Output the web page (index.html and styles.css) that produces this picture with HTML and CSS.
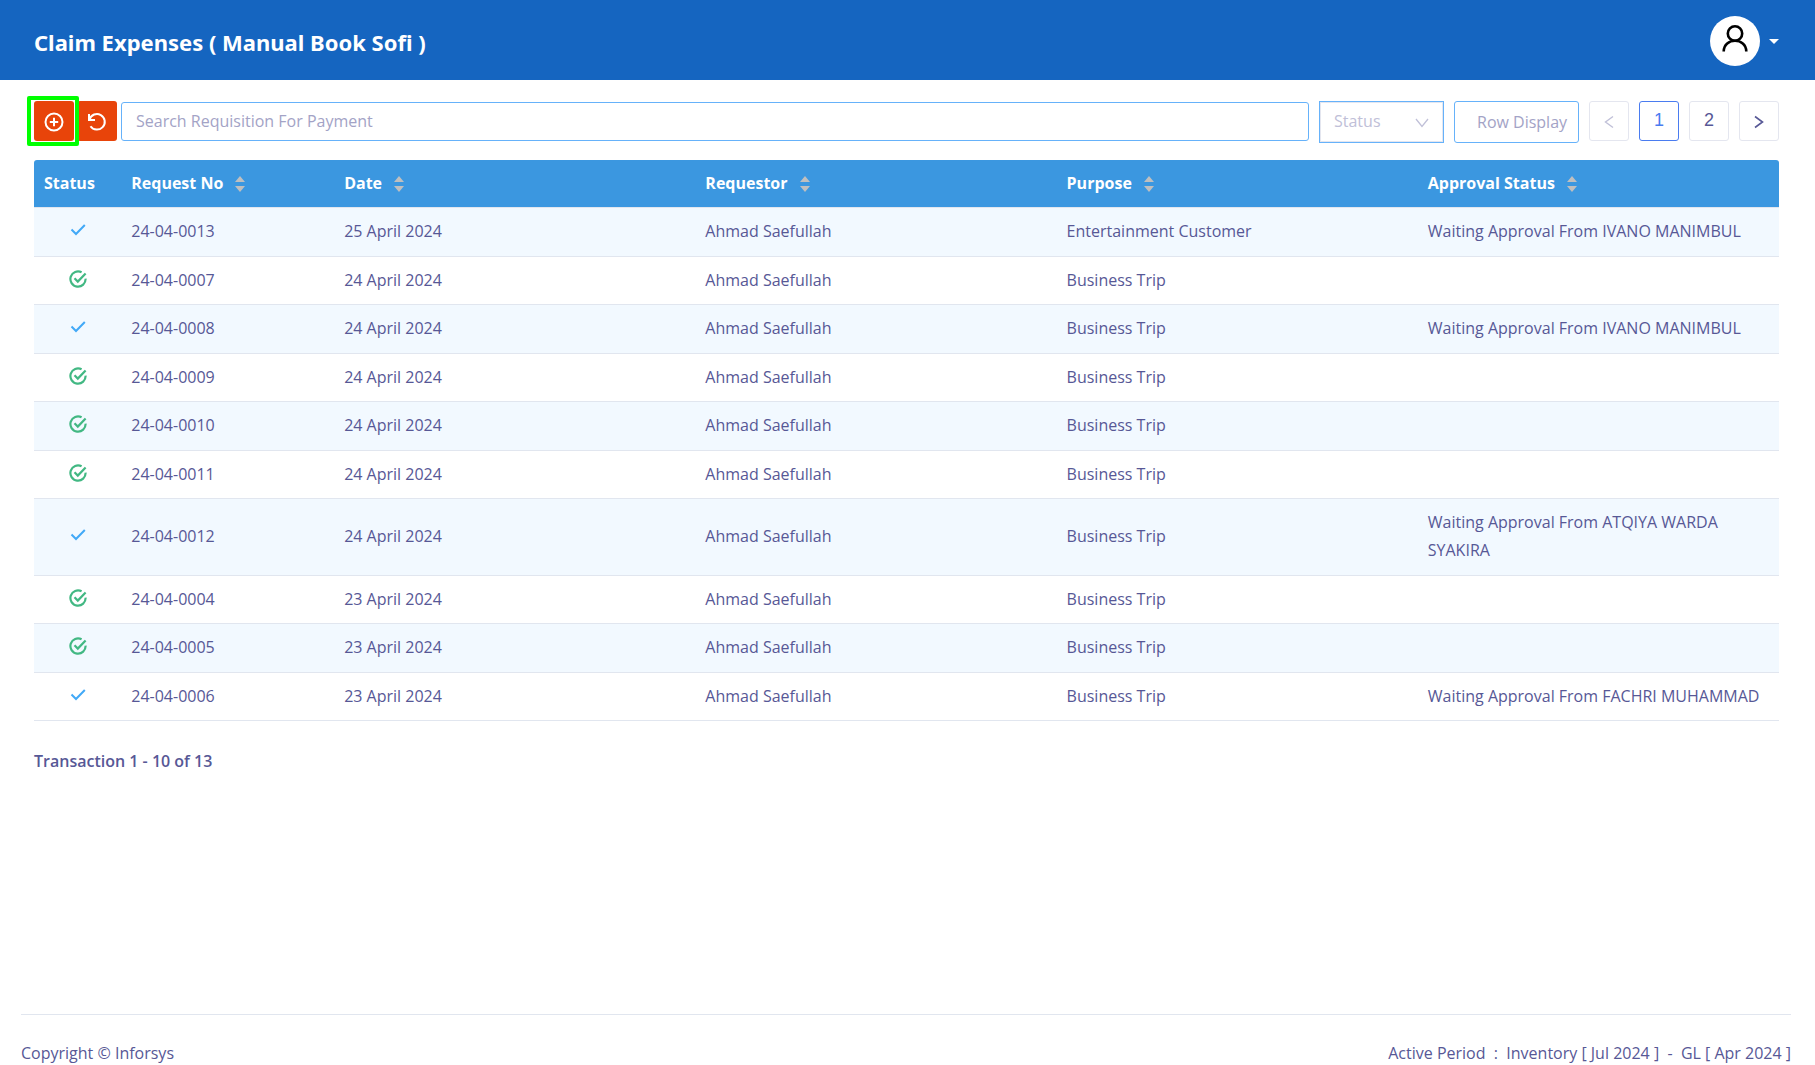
FILE: index.html
```html
<!DOCTYPE html>
<html lang="en">
<head>
<meta charset="utf-8">
<title>Claim Expenses</title>
<link rel="stylesheet" href="styles.css">
</head>
<body>
<svg class="sprite" aria-hidden="true">
  <symbol id="check" viewBox="0 0 16 16"><path d="M1.500 7.500l4.500 4.500 8.800-9" fill="none" stroke="currentColor" stroke-width="2"/></symbol>
  <symbol id="done" viewBox="0 0 18 18"><path d="M12.600 2.300A7.600 7.600 0 1 0 16.600 8.600M5.500 8.300l3.300 3.300L16.600 3.600" fill="none" stroke="currentColor" stroke-width="2.200"/></symbol>
  <symbol id="sort" viewBox="0 0 10 16"><path d="M5 0l5 6H0zM5 16l5-6H0z" fill="currentColor"/></symbol>
</svg>

<header class="topbar">
  <h1 class="title">Claim Expenses ( Manual Book Sofi )</h1>
  <button class="account" type="button" aria-label="Account">
    <span class="avatar"><svg width="28" height="30" viewBox="0 0 28 30" fill="none" stroke="#000" stroke-width="2.600"><circle cx="14" cy="9.500" r="7.200"/><path d="M2.700 27.500c0-14.400 22.600-14.400 22.600 0"/></svg></span>
    <svg width="10" height="5" viewBox="0 0 10 5" fill="#fff"><path d="M0 0h10L5 5z"/></svg>
  </button>
</header>

<main class="content">
  <div class="toolbar">
    <div class="actions">
      <button class="action highlighted" type="button" aria-label="Add">
        <svg width="20" height="20" viewBox="0 0 20 20" fill="none" stroke="#fff" stroke-width="2"><circle cx="10" cy="10" r="8.500"/><path d="M10 5.800v8.400M5.800 10h8.400"/></svg>
      </button>
      <button class="action" type="button" aria-label="Refresh">
        <svg width="20" height="20" viewBox="0 0 20 20" fill="none" stroke="#fff" stroke-width="2"><path d="M2 2v6h6M2.500 7.500A7.800 7.800 0 1 1 3.500 14.200"/></svg>
      </button>
      <input class="search" type="text" placeholder="Search Requisition For Payment" aria-label="Search Requisition For Payment">
    </div>
    <div class="picker">
      <select class="status-select" aria-label="Status"><option>Status</option></select>
      <svg class="chevron" width="14" height="10" viewBox="0 0 14 10" fill="none" stroke="currentColor" stroke-width="1.300"><path d="M1 1l6 7.500L13 1"/></svg>
    </div>
    <input class="row-display" type="text" placeholder="Row Display" aria-label="Row Display">
    <nav class="pages" aria-label="Pages">
      <button class="page" type="button" disabled aria-label="Previous"><svg width="10" height="14" viewBox="0 0 10 14" fill="none" stroke="currentColor" stroke-width="1.400"><path d="M9 1.500L1.500 7 9 12.500"/></svg></button>
      <button class="page current" type="button">1</button>
      <button class="page" type="button">2</button>
      <button class="page" type="button" aria-label="Next"><svg width="10" height="14" viewBox="0 0 10 14" fill="none" stroke="currentColor" stroke-width="1.600"><path d="M1 1.500L8.500 7 1 12.500"/></svg></button>
    </nav>
  </div>

  <table class="claims">
    <colgroup><col class="col-status"><col class="col-number"><col><col><col><col></colgroup>
    <thead>
      <tr>
        <th scope="col">Status</th>
        <th scope="col">Request No<svg class="sort"><use href="#sort"/></svg></th>
        <th scope="col">Date<svg class="sort"><use href="#sort"/></svg></th>
        <th scope="col">Requestor<svg class="sort"><use href="#sort"/></svg></th>
        <th scope="col">Purpose<svg class="sort"><use href="#sort"/></svg></th>
        <th scope="col">Approval Status<svg class="sort"><use href="#sort"/></svg></th>
      </tr>
    </thead>
    <tbody>
      <tr><td><svg class="mark waiting"><use href="#check"/></svg></td><td>24-04-0013</td><td>25 April 2024</td><td>Ahmad Saefullah</td><td>Entertainment Customer</td><td>Waiting Approval From IVANO MANIMBUL</td></tr>
      <tr><td><svg class="mark approved"><use href="#done"/></svg></td><td>24-04-0007</td><td>24 April 2024</td><td>Ahmad Saefullah</td><td>Business Trip</td><td></td></tr>
      <tr><td><svg class="mark waiting"><use href="#check"/></svg></td><td>24-04-0008</td><td>24 April 2024</td><td>Ahmad Saefullah</td><td>Business Trip</td><td>Waiting Approval From IVANO MANIMBUL</td></tr>
      <tr><td><svg class="mark approved"><use href="#done"/></svg></td><td>24-04-0009</td><td>24 April 2024</td><td>Ahmad Saefullah</td><td>Business Trip</td><td></td></tr>
      <tr><td><svg class="mark approved"><use href="#done"/></svg></td><td>24-04-0010</td><td>24 April 2024</td><td>Ahmad Saefullah</td><td>Business Trip</td><td></td></tr>
      <tr><td><svg class="mark approved"><use href="#done"/></svg></td><td>24-04-0011</td><td>24 April 2024</td><td>Ahmad Saefullah</td><td>Business Trip</td><td></td></tr>
      <tr><td><svg class="mark waiting"><use href="#check"/></svg></td><td>24-04-0012</td><td>24 April 2024</td><td>Ahmad Saefullah</td><td>Business Trip</td><td>Waiting Approval From ATQIYA WARDA SYAKIRA</td></tr>
      <tr><td><svg class="mark approved"><use href="#done"/></svg></td><td>24-04-0004</td><td>23 April 2024</td><td>Ahmad Saefullah</td><td>Business Trip</td><td></td></tr>
      <tr><td><svg class="mark approved"><use href="#done"/></svg></td><td>24-04-0005</td><td>23 April 2024</td><td>Ahmad Saefullah</td><td>Business Trip</td><td></td></tr>
      <tr><td><svg class="mark waiting"><use href="#check"/></svg></td><td>24-04-0006</td><td>23 April 2024</td><td>Ahmad Saefullah</td><td>Business Trip</td><td>Waiting Approval From FACHRI MUHAMMAD</td></tr>
    </tbody>
  </table>
  <p class="summary">Transaction 1 - 10 of 13</p>
</main>

<footer class="footer">
  <span>Copyright © Inforsys</span>
  <span>Active Period &nbsp;:&nbsp; Inventory [ Jul 2024 ] &nbsp;-&nbsp; GL [ Apr 2024 ]</span>
</footer>
</body>
</html>
```

FILE: styles.css
```css
* { box-sizing: border-box; }

body {
  margin: 0;
  min-height: 100vh;
  display: flex;
  flex-direction: column;
  background: #fff;
  color: #575896;
  font: 16px/28px "Open Sans", "Noto Sans", sans-serif;
}

button, input, select { font: inherit; color: inherit; margin: 0; }
button { cursor: pointer; }

.sprite { display: none; }

.topbar {
  display: flex;
  align-items: center;
  justify-content: space-between;
  height: 80px;
  padding: 2px 36px 0 34px;
  background: #1565c0;
  color: #fff;
}

.title { margin: 2px 0 0; font-size: 22px; line-height: 32px; font-weight: 700; font-family: "Noto Sans", "Open Sans", sans-serif; }

.account {
  display: flex;
  align-items: center;
  gap: 9px;
  padding: 0;
  border: 0;
  background: none;
}

.avatar {
  display: grid;
  justify-items: center;
  width: 50px;
  height: 50px;
  padding-top: 8px;
  border-radius: 50%;
  background: #fff;
}

.content { flex: 1; padding: 21px 36px 0 34px; }

.toolbar { display: flex; align-items: flex-start; gap: 10px; margin-bottom: 17px; }
.actions { flex: 1; display: flex; gap: 3px; height: 40px; }

.action {
  display: grid;
  place-items: center;
  flex: none;
  width: 40px;
  padding: 2px 0 0;
  border: 0;
  border-radius: 3px;
  background: #e8440a;
}

.highlighted { position: relative; z-index: 1; }
.highlighted::after {
  content: "";
  position: absolute;
  inset: -5px -5px -5px -7px;
  border: 4px solid #0f0;
  border-radius: 2px;
}

.search, .status-select, .row-display {
  border: 1px solid #66b2fa;
  background: #fff;
  min-width: 0;
}
.search { flex: 1; margin: 1px 0 0 1px; padding: 0 14px 2px; border-radius: 3px; }
.row-display { width: 125px; height: 42px; padding: 0 4px 0 22px; border-radius: 3px; }
::placeholder { color: #a3a3c6; opacity: 1; }

.picker { position: relative; width: 125px; }
.status-select {
  appearance: none;
  display: block;
  width: 100%;
  height: 42px;
  padding: 0 14px 2px;
  border-radius: 0;
  box-shadow: inset 0 0 0 1px #e4e6ef;
  color: #c0c0d8;
}
.chevron { position: absolute; right: 15px; top: 17px; color: #c0c0d8; pointer-events: none; }

.pages { display: flex; gap: 10px; }
.page {
  display: grid;
  place-items: center;
  width: 40px;
  height: 40px;
  padding: 0 0 2px;
  border: 1px solid #e4e6ef;
  border-radius: 3px;
  background: #fff;
  font: 18px/28px "Liberation Sans", Arial, sans-serif;
}
.page svg { margin-top: 3px; }
.page:disabled { color: #c0c0d8; }
.current { border-color: #4a7cf0; color: #4a7cf0; }

.claims { width: 100%; table-layout: fixed; border-collapse: separate; border-spacing: 0; }
.col-status { width: 5%; }
.col-number { width: 12.2%; }

.claims th {
  height: 48px;
  padding: 0 10px 2px;
  border-bottom: 1px solid #e1e6ef;
  background: #3b97e0 padding-box;
  color: #fff;
  font-weight: 700;
  text-align: left;
}
.claims th:first-child { border-top-left-radius: 3px; }
.claims th:last-child { border-top-right-radius: 3px; }
.sort { width: 10px; height: 16px; margin-left: 12px; vertical-align: -3px; color: #bfbfbf; }

.claims td { padding: 9px 10px 11px; border-bottom: 1px solid #e1e6ef; }
.claims tr:nth-child(even) td { padding-bottom: 10px; }
.claims tbody tr:nth-child(odd) { background: #f2f9ff; }
.claims td:first-child { text-align: center; }

.mark { display: block; width: 18px; height: 18px; margin: 0 auto 3px; }
.waiting { width: 16px; height: 16px; color: #42a9f7; }
.approved { color: #42b883; }

.summary { margin: 26px 0; font-weight: 600; }

.footer {
  display: flex;
  justify-content: space-between;
  margin: 0 24px 0 21px;
  padding-top: 26px;
  border-top: 1px solid #e1e6ef;
  line-height: 24px;
}
```
